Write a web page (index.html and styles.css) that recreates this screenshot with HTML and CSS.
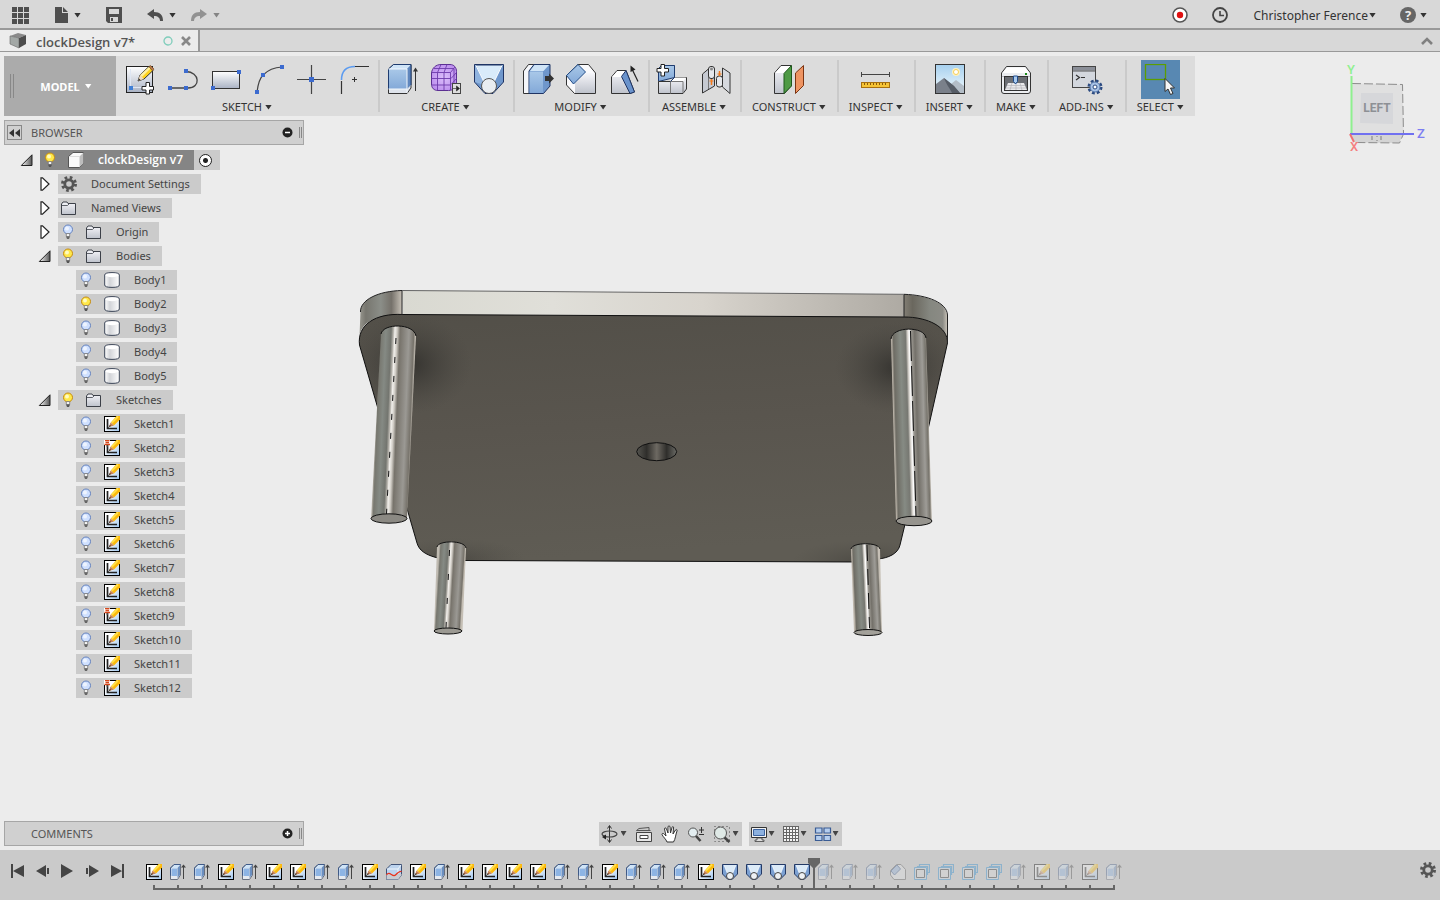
FILE: index.html
```html
<!DOCTYPE html>
<html lang="en">
<head>
  <meta charset="UTF-8" />
  <meta name="viewport" content="width=device-width, initial-scale=1.0"/>
  <title>clockDesign v7*</title>
  <link rel="stylesheet" href="styles.css">
</head>
<body>

<svg class="sprite" aria-hidden="true">
  <defs>
    <linearGradient id="gPaper" x1="0" y1="0" x2="0" y2="1"><stop offset="0" stop-color="#fff"/><stop offset="1" stop-color="#a9b2c4"/></linearGradient>
    <linearGradient id="gBlue" x1="0" y1="0" x2="0" y2="1"><stop offset="0" stop-color="#a9c8e8"/><stop offset="1" stop-color="#83a9d8"/></linearGradient>
    <linearGradient id="gSteel" x1="0" y1="0" x2="0" y2="1"><stop offset="0" stop-color="#f6f6fa"/><stop offset="1" stop-color="#bfc3cc"/></linearGradient>
    <linearGradient id="gSketch" x1="0" y1="0" x2="1" y2="1"><stop offset="0.35" stop-color="#fff"/><stop offset="1" stop-color="#9cc4ee"/></linearGradient>
    <linearGradient id="gCyl" x1="0" y1="0" x2="1" y2="0"><stop offset="0" stop-color="#fff"/><stop offset="0.35" stop-color="#d2d4d8"/><stop offset="1" stop-color="#fff"/></linearGradient>
    <linearGradient id="gSky" x1="0" y1="0" x2="0" y2="1"><stop offset="0" stop-color="#a6d0ee"/><stop offset="1" stop-color="#f3fafd"/></linearGradient>
    <linearGradient id="gTri" x1="0" y1="0" x2="1" y2="0"><stop offset="0" stop-color="#fff"/><stop offset="1" stop-color="#555"/></linearGradient>
    <radialGradient id="gForm" cx="0.5" cy="0.5" r="0.6"><stop offset="0" stop-color="#dcc0fb"/><stop offset="1" stop-color="#b98aec"/></radialGradient>
  </defs>

  <!-- toolbar icons -->
  <symbol id="t-sketch" viewBox="0 0 33 33">
    <rect x="3.5" y="2.5" width="26" height="26" fill="url(#gPaper)" stroke="#222"/>
    <path d="M7.5 5v18.500h18" fill="none" stroke="#dfe6f2"/>
    <rect x="6" y="22" width="4" height="4" fill="#3f7fd6"/>
    <path d="M15 17l2-6L26 2.500l4 4L21 15z" fill="#ffd21e" stroke="#333"/>
    <path d="M17 11l9-8 1.500 1.500-8.500 8.500z" fill="#fff0a0"/>
    <path d="M26 2.500l1.500-1 3.500 3.500-1.500 2z" fill="#b87a4a" stroke="#6e4424" stroke-width=".6"/>
    <path d="M15 17l2-6 4 4z" fill="#f2dcc0"/><path d="M15 17l1-2.500 1.500 1.500z" fill="#222"/>
    <path d="M23 18.500h3.500V22.500H30.500V26H26.500v4H23v-4h-4v-3.500h4z" fill="#fff" stroke="#222"/>
  </symbol>
  <symbol id="t-line" viewBox="0 0 33 33">
    <path d="M4 24h18c13 0 12-16-2-16.500" fill="none" stroke="#444" stroke-width="1.300"/>
    <path d="M2 22h4v4H2zM18 22h4v4h-4zM18 5h4v4h-4z" fill="#3c6bcf"/>
  </symbol>
  <symbol id="t-rect" viewBox="0 0 33 33">
    <rect x="3.500" y="7.500" width="27" height="17" fill="url(#gPaper)" stroke="#333"/>
    <path d="M2 22h4v4H2zM28 6h4v4h-4z" fill="#3c6bcf"/>
  </symbol>
  <symbol id="t-arc" viewBox="0 0 33 33">
    <path d="M5 28C6 20 7 15 11 11S21 3.500 30 3" fill="none" stroke="#444" stroke-width="1.200"/>
    <path d="M3 26h4v4H3zM9 9h4v4H9zM28 1h4v4h-4z" fill="#3c6bcf"/>
  </symbol>
  <symbol id="t-point" viewBox="0 0 33 33">
    <path d="M16.500 1v29M2 15.500h29" stroke="#444" stroke-width="1.200"/>
    <rect x="14" y="13" width="5" height="5" fill="#3c6bcf"/>
  </symbol>
  <symbol id="t-fillet" viewBox="0 0 33 33">
    <path d="M3.500 17v13M17 2.500h14" stroke="#333" stroke-width="1.200"/>
    <path d="M3.500 16C3.500 7 8 2.500 17 2.500" fill="none" stroke="#5b9bf0" stroke-width="1.500"/>
    <path d="M16.500 13v5M14 15.500h5" stroke="#333"/>
  </symbol>
  <symbol id="t-extrude" viewBox="0 0 33 33">
    <path d="M2.500 5l5-4.500h17.500V24l-4 5.500H2.500z" fill="#dfe4ec" stroke="#333"/>
    <path d="M2.500 5H21v20H2.500z" fill="url(#gBlue)"/>
    <path d="M2.500 5l5-4.500h17.500L21 5z" fill="#cfe4f7"/><path d="M21 5l4-4.500V21l-4 4z" fill="#5f86bd"/>
    <path d="M2.500 25V5l5-4.500h17.500V21" fill="none" stroke="#1f3c70"/>
    <path d="M2.500 5H21V29M2.500 25H21" fill="none" stroke="#f2f7fc"/>
    <path d="M29.500 27V5" stroke="#333"/><path d="M27 7.500l2.500-4 2.500 4z" fill="#333"/>
  </symbol>
  <symbol id="t-form" viewBox="0 0 33 33">
    <path d="M2.500 9C3 4 7 .5 12 .5h9c4 0 6.500 3 6.500 7V18c0 5-3 8.500-8 8.500H9C5 26.500 2.500 24 2.500 20z" fill="url(#gForm)" stroke="#5b2f92"/>
    <path d="M3 8.500h18.500M2.500 14.500h19.500M3 21h18.500M8.500 9v17M15 9v17M5 4.500h20M21.500 8.500V26M21.500 8.500L26 3M22 14.500l5.500-6M22 20.500l5.500-6M8.500 8.500L12 .5M15 8.500L18 .5M25 5v17" fill="none" stroke="#6d3bab" stroke-width=".9"/>
    <rect x="23.500" y="19.500" width="8" height="10" fill="#ddd" stroke="#444"/>
    <path d="M24 24.500h3.500v-2.500l3 2.500-3 2.500v-2.500" fill="#222" stroke="#222" stroke-width=".6"/>
  </symbol>
  <symbol id="t-hole" viewBox="0 0 33 33">
    <path d="M2.500.5h29V18L21 29.500h-8L2.500 18z" fill="#6f97cc" stroke="#1f3464"/>
    <path d="M4 1h26l-8 17H12z" fill="#d9ebfa"/><path d="M4 1l-1 1v16l9 3V18z" fill="#8fb3df"/>
    <path d="M4 1h26" stroke="#1f3464"/><path d="M4 1.500L12 18M30 1.500L22 18" stroke="#fff"/>
    <circle cx="17" cy="22" r="7.500" fill="#e9edf1" stroke="#555"/>
  </symbol>
  <symbol id="t-press" viewBox="0 0 33 33">
    <path d="M2.500 7l5-6.500h8L10 7v22.500H2.500z" fill="#f4f6fa" stroke="#333"/>
    <path d="M8 7l5-6.500h16V22l-6.500 7.500H8z" fill="#6f97cc" stroke="#1f3464"/>
    <path d="M8.500 7.500H22V29H8.500z" fill="url(#gBlue)"/><path d="M9 7l4.500-6H28l-5.500 6z" fill="#cfe4f7"/>
    <path d="M24 12h4V9.500l5 5-5 5V17h-4z" fill="#333"/>
  </symbol>
  <symbol id="t-chamfer" viewBox="0 0 33 33">
    <path d="M2.500 11.500L14 .5h10.500L31.500 9v20.500H10.500L2.500 21z" fill="#fafafc" stroke="#333"/>
    <path d="M11 19l11-10h9V29H11z" fill="url(#gSteel)"/>
    <path d="M2.500 11.500L14 .5 21.500 8l-12 12z" fill="url(#gBlue)" stroke="#1f4a86"/>
  </symbol>
  <symbol id="t-draft" viewBox="0 0 33 33">
    <path d="M4.500 13L10 6.500h9L27.500 28 23 29.500H4.500z" fill="url(#gSteel)" stroke="#333"/>
    <path d="M5 13l5.500-6H18l-3.500 6z" fill="#fff"/>
    <path d="M14.500 12.500l4.500-6L27.500 28 23 29.500z" fill="#6a93cc" stroke="#1f3464"/>
    <path d="M31 17.500L25 5" stroke="#222" stroke-width="1.200"/><path d="M23.500 1.500l5 4-5 2.500z" fill="#222"/>
  </symbol>
  <symbol id="t-newcomp" viewBox="0 0 33 33">
    <path d="M2.500 17.500V4.500l3-3h13v12z" fill="url(#gBlue)" stroke="#1f3c70"/>
    <path d="M2.500 17.500h12l4-4h12V25l-3.500 4.500H2.500z" fill="url(#gSteel)" stroke="#333"/>
    <path d="M15 17.500l4-4h11l-3 4z" fill="#fff"/><path d="M14.500 17.500V29.500M14.500 17.500H27V29" fill="none" stroke="#777"/>
    <path d="M14.500 17.500L18.500 13.500V1.500" fill="none" stroke="#1f3c70"/>
    <path d="M5 .5h3.500V4.500h4V8h-4v4H5V8H1V4.500h4z" fill="#fff" stroke="#222"/>
  </symbol>
  <symbol id="t-joint" viewBox="0 0 33 33">
    <path d="M3.500 10L10 4.500H15.500V22L3.500 29z" fill="#c6cad2" stroke="#333"/>
    <path d="M9.500 5.500V25" stroke="#777"/>
    <rect x="9.500" y="2.500" width="6" height="12" rx="2.500" fill="#e6e8ec" stroke="#333"/><circle cx="12.500" cy="5" r="1.500" fill="#888"/>
    <path d="M23.500 4L31 9v20.500L23.500 23z" fill="#d6d9df" stroke="#333"/>
    <rect x="17.500" y="12" width="6" height="11" rx="2.500" fill="#e6e8ec" stroke="#333"/>
    <path d="M12.500 15v6M20.500 7v5" stroke="#f47a1c" stroke-width="1.500"/><path d="M10.500 17h4M18.500 10h4" stroke="#f47a1c"/>
  </symbol>
  <symbol id="t-construct" viewBox="0 0 33 33">
    <path d="M2.500 9L9 1.500h10V22l-6.500 7.500h-10z" fill="url(#gSteel)" stroke="#333"/>
    <path d="M3 9l6.500-7H18l-6 7z" fill="#fff"/>
    <path d="M12 9.500l7.500-8V22L12 29.500z" fill="#4e9a45" stroke="#1f5a1c"/>
    <path d="M23.500 9L31.500 1.500v20L23.500 29.500z" fill="#ee9462" stroke="#7a3413"/>
  </symbol>
  <symbol id="t-inspect" viewBox="0 0 33 33">
    <path d="M2.500 10.500h28M2.500 8v5M30.500 8v5" stroke="#444"/>
    <rect x="2.500" y="18.500" width="28" height="5" fill="#f6c436" stroke="#a8700f"/>
    <path d="M5.500 19v2M8.500 19v2M11.500 19v2M14.500 19v2M17.500 19v2M20.500 19v2M23.500 19v2M26.500 19v2" stroke="#8a5a0a"/>
  </symbol>
  <symbol id="t-insert" viewBox="0 0 33 33">
    <rect x="2.500" y=".5" width="29" height="29" fill="url(#gSky)" stroke="#333"/>
    <circle cx="23" cy="8" r="4" fill="#fdf2c2"/><circle cx="23" cy="8" r="2.500" fill="#fff" stroke="#f4cf5c"/>
    <path d="M18 20l5-4 8 6v7H18z" fill="#b3bdc7"/><path d="M3 20l8-6 10 8 6 7H3z" fill="#7a808a"/><path d="M11 14l10 8 6 7H19c-2-5-5-7-8-15z" fill="#565c66"/>
  </symbol>
  <symbol id="t-make" viewBox="0 0 33 33">
    <path d="M2.500 9L7.500 2.500h19L31.500 9v18q0 2.500-2.500 2.500H5q-2.500 0-2.500-2.500z" fill="#eceef1" stroke="#333"/>
    <path d="M3.500 9L8 3.500h18L30.500 9z" fill="#fff"/><path d="M3 12.500h28" stroke="#b8bcc4"/>
    <rect x="26" y="9" width="2" height="2" fill="#1a8c1a"/>
    <rect x="5.500" y="12.500" width="23" height="14" fill="#6b6e74" stroke="#333"/>
    <path d="M9 19h16l3 7H6z" fill="#e9e9ec"/><path d="M8 21.500h18M7 24h20M13 19l-2 7M17 19v7M21 19l2 7" stroke="#b5b5ba" stroke-width=".7"/>
    <path d="M14.500 12h4v5.500L16.500 20l-2-2.500z" fill="#a9cbf0" stroke="#1f4a8a"/>
  </symbol>
  <symbol id="t-addins" viewBox="0 0 33 33">
    <rect x="2.500" y="2.500" width="23" height="21" fill="#d3d7de" stroke="#444"/>
    <path d="M3 3h22v3.500H3z" fill="#8b8f98"/><path d="M3 7h22" stroke="#555"/>
    <path d="M6 11l3.500 2.500L6 16M11 13.500h4" fill="none" stroke="#333" stroke-width="1.200"/>
    <circle cx="25" cy="23" r="6" fill="none" stroke="#2b4a80" stroke-width="3" stroke-dasharray="2.700 2"/>
    <circle cx="25" cy="23" r="5" fill="#a9c3e6" stroke="#5577ab"/>
    <circle cx="25" cy="23" r="2" fill="#fff" stroke="#2b4a80"/>
  </symbol>
  <symbol id="t-select" viewBox="0 0 33 33">
    <rect x="1.500" y=".5" width="20" height="15" fill="none" stroke="#5c9e00" stroke-width="1.300"/>
    <path d="M21 14.500v13l3-2.500 2.500 5.500 2.500-1-2.500-5.500h4z" fill="#f5f5f5" stroke="#333"/>
  </symbol>

  <!-- 16px icons, shared by the browser tree and the timeline -->
  <symbol id="i-sketch" viewBox="0 0 16 16">
    <rect x=".5" y=".5" width="15" height="15" fill="url(#gSketch)" stroke="#000"/>
    <path d="M3.500 3v9.500H13" fill="none" stroke="#222" stroke-width="1.700"/><path d="M4 12l4-4" stroke="#555"/>
    <path d="M7 6.500L12.500 0H16v3.500L10 9.500z" fill="#fcb80c"/><path d="M8 6.500L14 .5" stroke="#ffe04a" stroke-width="1.800"/>
    <path d="M5 11l1.500-4.500 3.500 3z" fill="#c98252"/><path d="M5 11l.8-2 1.200 1z" fill="#222"/>
  </symbol>
  <symbol id="i-pinned" viewBox="0 0 16 16">
    <use href="#i-sketch"/>
    <path d="M0 0h6v5H0z" fill="#fff"/><path d="M1 .5h4.500M.5 4.500h5.500M1.500 2.500h3.500" stroke="#d5481c" stroke-width="1.400"/><path d="M3.200 5v2" stroke="#555"/>
  </symbol>
  <symbol id="i-extrude" viewBox="0 0 16 16">
    <path d="M.5 4L4 .5h6.500V11L7.500 15.500H.5z" fill="#e6eaf0" stroke="#6a7180"/>
    <path d="M1.500 4.500H7V12H1.500z" fill="#8db4e4"/><path d="M1.500 4L4.500 1H10L7 4z" fill="#cfe4f7"/><path d="M7.500 4l2.500-3v10l-2.500 3z" fill="#6b8fc0"/>
    <path d="M.5 11.500V4L4 .5h6.500" fill="none" stroke="#3f5a88"/>
    <path d="M13.500 15V2" stroke="#444"/><path d="M11 3.500L13.500.5 16 3.500z" fill="#444"/>
  </symbol>
  <symbol id="i-hole" viewBox="0 0 16 16">
    <path d="M.5.5h15V10L10 15.500H6L.5 10z" fill="#7ba0d2" stroke="#243a66"/>
    <path d="M2 1h12l-4 10H6z" fill="#dcebf8"/><path d="M2 1l4 10M14 1l-4 10" stroke="#fff" stroke-width=".7"/>
    <circle cx="8" cy="12" r="3.500" fill="#eef1f4" stroke="#444"/>
  </symbol>
  <symbol id="i-split" viewBox="0 0 16 16">
    <path d="M.5 5L5 .5h10.500V11L12 15.500H.5z" fill="#bcd3ee" stroke="#3f5276"/>
    <path d="M.5 10h15v1L12 15.500H.5z" fill="#c9ccd2"/><path d="M1 5h11v5M12 5l3-4" fill="none" stroke="#eef5fc"/>
    <path d="M.5 11c3-5 6 3 9 0s4-4 6-3.500" fill="none" stroke="#e8301c" stroke-width="1.200"/>
  </symbol>
  <symbol id="i-fillet" viewBox="0 0 16 16">
    <path d="M.5 6.500L6.500.5h4.500l4.500 5v10H4L.5 11z" fill="#e4e7ec" stroke="#555"/><path d="M1 7l6-6 3.500 4-6 6z" fill="#8fb3df" stroke="#2f4f86"/>
  </symbol>
  <symbol id="i-pattern" viewBox="0 0 16 16">
    <path d="M5.500 3.500v-3h10v8h-3M3.500 4v-1.500h10v8h-2" fill="none" stroke="#1f86d0" stroke-width="1.200"/>
    <path d="M.5 3.500h12v12H.5z" fill="#cfdbe6" stroke="#1f86d0"/><path d="M2.500 5.500h8v8h-8z" fill="#e0e0e0" stroke="#222"/>
  </symbol>
  <symbol id="i-bulb" viewBox="0 0 16 16">
    <circle cx="8" cy="5.500" r="4.500" fill="#cfe0ff" stroke="#6482be"/><circle cx="7" cy="4.500" r="2" fill="#eef4ff"/>
    <path d="M6.300 9.500h3.400v3H6.300z" fill="#f2f2f2" stroke="#777" stroke-width=".8"/><path d="M6 12.500h4l-1 2.500H7z" fill="#666"/>
  </symbol>
  <symbol id="i-bulb-on" viewBox="0 0 16 16">
    <circle cx="8" cy="5.500" r="4.500" fill="#ffe84a" stroke="#c58a12"/><circle cx="7" cy="4.500" r="2" fill="#fffbc0"/>
    <path d="M6.300 9.500h3.400v3H6.300z" fill="#f2f2f2" stroke="#777" stroke-width=".8"/><path d="M6 12.500h4l-1 2.500H7z" fill="#555"/>
  </symbol>
  <symbol id="i-folder" viewBox="0 0 16 16">
    <path d="M.5 14.500V4L2 2h4l1 1.500h7.500v11z" fill="url(#gSteel)" stroke="#3c4048"/><path d="M1 5.500h5.500L8 4" fill="none" stroke="#3c4048" stroke-width=".8"/>
  </symbol>
  <symbol id="i-body" viewBox="0 0 16 16">
    <path d="M.7 3Q.7.6 8 .6T15.300 3v10q0 2.400-7.300 2.400T.7 13z" fill="url(#gCyl)" stroke="#3c4658"/><ellipse cx="8" cy="3.200" rx="6.500" ry="2" fill="#fff"/>
  </symbol>
  <symbol id="i-comp" viewBox="0 0 16 16">
    <path d="M.5 4.500L5 .5h10.500V11L11.500 15.500H.5z" fill="#fafafa" stroke="#555"/><path d="M11.500 4.500l4-4V11l-4 4z" fill="#bdbdbd"/><path d="M1 4.500h10.500V15" fill="none" stroke="#ddd"/>
  </symbol>
  <symbol id="i-gear" viewBox="0 0 16 16">
    <circle cx="8" cy="8" r="6.500" fill="none" stroke="#555" stroke-width="3" stroke-dasharray="2.600 2.500"/><circle cx="8" cy="8" r="4.200" fill="none" stroke="#555" stroke-width="2.800"/>
  </symbol>
  <symbol id="i-open" viewBox="0 0 12 12"><path d="M.8 11.500L11.500.8v10.700z" fill="url(#gTri)" stroke="#222"/></symbol>
  <symbol id="i-closed" viewBox="0 0 12 14"><path d="M2.500.8h1.500L10.500 7 4 13.200H2.500z" fill="#fff" stroke="#222" stroke-width="1.200"/></symbol>
</svg>

<header class="appbar">
  <button aria-label="Data panel"><svg width="17" height="17"><path d="M0 0h5v5H0zM6 0h5v5H6zM12 0h5v5h-5zM0 6h5v5H0zM6 6h5v5H6zM12 6h5v5h-5zM0 12h5v5H0zM6 12h5v5H6zM12 12h5v5h-5z" fill="#4f4f4f"/></svg></button>
  <button aria-label="File"><svg width="14" height="16"><path d="M1 0h7v6h6v10H1zM9 0l5 5H9z" fill="#4f4f4f"/></svg><i class="caret"></i></button>
  <button aria-label="Save"><svg width="16" height="16"><path d="M0 0h16v16H2l-2-2z" fill="#4f4f4f"/><path d="M3 2h10v5H3zM4 10h8v5H4z" fill="#d8d8d8"/><path d="M5 11h2v3H5z" fill="#4f4f4f"/></svg></button>
  <div class="history">
    <button aria-label="Undo"><svg width="16" height="13"><path d="M0 5l7-5v3c6 0 9 3 9 9h-3c0-3-2-5-6-5v3z" fill="#4f4f4f"/></svg><i class="caret"></i></button>
    <button class="disabled" aria-label="Redo"><svg width="16" height="13"><path d="M16 5L9 0v3C3 3 0 6 0 12h3c0-3 2-5 6-5v3z" fill="#4f4f4f"/></svg><i class="caret"></i></button>
  </div>
  <div class="account">
    <button aria-label="Record"><svg width="16" height="16"><circle cx="8" cy="8" r="7" fill="#fff" stroke="#555" stroke-width="1.600"/><circle cx="8" cy="8" r="3.200" fill="#e01010"/></svg></button>
    <button aria-label="Job status"><svg width="16" height="16"><circle cx="8" cy="8" r="7" fill="none" stroke="#444" stroke-width="1.800"/><path d="M8 4v4.500h4" fill="none" stroke="#444" stroke-width="1.600"/></svg></button>
    <button class="user">Christopher Ference<i class="caret"></i></button>
    <button class="help" aria-label="Help"><span class="help-mark">?</span><i class="caret"></i></button>
  </div>
</header>

<div class="tabs">
  <div class="tab">
    <svg width="16" height="16"><path d="M0 3l8-3 8 2-7 3z" fill="#8a8a8a"/><path d="M0 3l9 2v10L0 11z" fill="#a3a8a6" stroke="#666" stroke-width=".6"/><path d="M9 5l7-3v9l-7 4z" fill="#4d4d4d"/></svg>
    <span class="tab-name">clockDesign v7*</span>
    <svg width="10" height="10"><circle cx="5" cy="5" r="4" fill="none" stroke="#7fcdbb" stroke-width="1.300"/></svg>
    <button aria-label="Close tab"><svg width="10" height="10"><path d="M1 1l8 8M9 1L1 9" stroke="#888" stroke-width="2.600"/></svg></button>
  </div>
  <button class="collapse" aria-label="Collapse toolbar"><svg width="12" height="8"><path d="M1 7l5-5 5 5" fill="none" stroke="#808080" stroke-width="2.600"/></svg></button>
</div>

<main class="workspace">
  <nav class="toolbar">
    <button class="mode"><span class="grip"></span><span>MODEL</span><i class="caret"></i></button>
    <div class="group">
      <div class="tools">
        <button aria-label="Create Sketch"><svg><use href="#t-sketch"/></svg></button>
        <button aria-label="Line"><svg><use href="#t-line"/></svg></button>
        <button aria-label="Rectangle"><svg><use href="#t-rect"/></svg></button>
        <button aria-label="Arc"><svg><use href="#t-arc"/></svg></button>
        <button aria-label="Point"><svg><use href="#t-point"/></svg></button>
        <button aria-label="Sketch Fillet"><svg><use href="#t-fillet"/></svg></button>
      </div>
      <button class="menu">SKETCH<i class="caret"></i></button>
    </div>
    <div class="group">
      <div class="tools">
        <button aria-label="Extrude"><svg><use href="#t-extrude"/></svg></button>
        <button aria-label="Create Form"><svg><use href="#t-form"/></svg></button>
        <button aria-label="Hole"><svg><use href="#t-hole"/></svg></button>
      </div>
      <button class="menu">CREATE<i class="caret"></i></button>
    </div>
    <div class="group">
      <div class="tools">
        <button aria-label="Press Pull"><svg><use href="#t-press"/></svg></button>
        <button aria-label="Chamfer"><svg><use href="#t-chamfer"/></svg></button>
        <button aria-label="Draft"><svg><use href="#t-draft"/></svg></button>
      </div>
      <button class="menu">MODIFY<i class="caret"></i></button>
    </div>
    <div class="group">
      <div class="tools">
        <button aria-label="New Component"><svg><use href="#t-newcomp"/></svg></button>
        <button aria-label="Joint"><svg><use href="#t-joint"/></svg></button>
      </div>
      <button class="menu">ASSEMBLE<i class="caret"></i></button>
    </div>
    <div class="group single">
      <div class="tools"><button aria-label="Offset Plane"><svg><use href="#t-construct"/></svg></button></div>
      <button class="menu">CONSTRUCT<i class="caret"></i></button>
    </div>
    <div class="group single">
      <div class="tools"><button aria-label="Measure"><svg><use href="#t-inspect"/></svg></button></div>
      <button class="menu">INSPECT<i class="caret"></i></button>
    </div>
    <div class="group single">
      <div class="tools"><button aria-label="Insert Image"><svg><use href="#t-insert"/></svg></button></div>
      <button class="menu">INSERT<i class="caret"></i></button>
    </div>
    <div class="group single">
      <div class="tools"><button aria-label="3D Print"><svg><use href="#t-make"/></svg></button></div>
      <button class="menu">MAKE<i class="caret"></i></button>
    </div>
    <div class="group single">
      <div class="tools"><button aria-label="Scripts and Add-Ins"><svg><use href="#t-addins"/></svg></button></div>
      <button class="menu">ADD-INS<i class="caret"></i></button>
    </div>
    <div class="group single">
      <div class="tools"><button class="active" aria-label="Select"><svg><use href="#t-select"/></svg></button></div>
      <button class="menu">SELECT<i class="caret"></i></button>
    </div>
  </nav>

  <svg class="viewcube" width="90" height="96" viewBox="1340 60 90 96">
    <path d="M1352 83.500l50.500 1 1 49.500-52.500-.5z" fill="#e0e0e0"/>
    <path d="M1361 93h32v31l-33-1z" fill="#d6d7da"/>
    <path d="M1351 134l52 .5-4 8.500-44-.5z" fill="#d4d4d4"/>
    <path d="M1352 83.500l50.500 1 1 49.500-4 9-44-.5" fill="none" stroke="#8c8c8c" stroke-dasharray="9 3"/>
    <path d="M1372 136v4M1377 136v1M1381 136v4M1377 140v1" stroke="#999" stroke-width="1.500"/>
    <text class="face" x="1377" y="112">LEFT</text>
    <path d="M1351.500 133V76" stroke="#8ff08f" stroke-width="2"/>
    <path d="M1350 134h64" stroke="#7070f0" stroke-width="2"/>
    <path d="M1350 134l4 8" stroke="#f07070" stroke-width="2"/>
    <text class="axis axis-y" x="1351" y="74">Y</text>
    <text class="axis axis-z" x="1421" y="138">Z</text>
    <text class="axis axis-x" x="1354" y="151">X</text>
  </svg>

  <div class="stage">
    <aside class="browser">
      <div class="panel">
        <button class="panel-fold" aria-label="Fold browser"><svg width="11" height="8"><path d="M5 0v8L0 4zM11 0v8L6 4z" fill="#333"/></svg></button>
        <h2>BROWSER</h2>
        <button aria-label="Minimize"><svg width="11" height="11"><circle cx="5.500" cy="5.500" r="5" fill="#222"/><path d="M3 5.500h5" stroke="#fff" stroke-width="1.500"/></svg></button>
        <span class="grip"></span>
      </div>
      <ul class="tree" id="tree"></ul>
    </aside>

    <svg class="model" width="610" height="370" viewBox="350 280 610 370">
      <defs>
        <linearGradient id="mSide" x1="0" x2="1"><stop offset="0" stop-color="#d9d9d1"/><stop offset=".3" stop-color="#e0dfd9"/><stop offset=".6" stop-color="#d8d4cd"/><stop offset="1" stop-color="#aeaaa3"/></linearGradient>
        <linearGradient id="mCornerL" x1="0" x2="1"><stop offset="0" stop-color="#98978f"/><stop offset=".15" stop-color="#77766f"/><stop offset=".5" stop-color="#8b8e88"/><stop offset=".75" stop-color="#75716a"/><stop offset="1" stop-color="#c6c0b6"/></linearGradient>
        <linearGradient id="mCornerR" x1="0" x2="1"><stop offset="0" stop-color="#827e74"/><stop offset=".2" stop-color="#6a675e"/><stop offset=".6" stop-color="#858780"/><stop offset=".9" stop-color="#8b8b85"/><stop offset="1" stop-color="#c4beb4"/></linearGradient>
        <linearGradient id="mFace" x1="0" y1="0" x2=".15" y2="1"><stop offset="0" stop-color="#524f48"/><stop offset=".5" stop-color="#59554e"/><stop offset="1" stop-color="#5f5c54"/></linearGradient>
        <radialGradient id="mShade"><stop offset="0" stop-color="#2c2b28" stop-opacity=".8"/><stop offset="1" stop-color="#45433e" stop-opacity="0"/></radialGradient>
        <linearGradient id="mLegL" x1="0" x2="1" gradientTransform="matrix(.83 0 -.17 1 .17 0)"><stop offset="0" stop-color="#c0bbb2"/><stop offset=".06" stop-color="#77776f"/><stop offset=".2" stop-color="#858a84"/><stop offset=".34" stop-color="#73756f"/><stop offset=".4" stop-color="#b5b2ab"/><stop offset=".44" stop-color="#f2f0ec"/><stop offset=".5" stop-color="#d0ccc5"/><stop offset=".58" stop-color="#77736b"/><stop offset=".82" stop-color="#9b9994"/><stop offset=".95" stop-color="#77736b"/><stop offset="1" stop-color="#c4beb4"/></linearGradient>
        <linearGradient id="mLegR" x1="0" x2="1" gradientTransform="matrix(.87 0 .13 1 0 0)"><stop offset="0" stop-color="#bdb6ab"/><stop offset=".06" stop-color="#6e6c64"/><stop offset=".25" stop-color="#868b84"/><stop offset=".4" stop-color="#777872"/><stop offset=".46" stop-color="#d6d2cc"/><stop offset=".51" stop-color="#fff"/><stop offset=".56" stop-color="#9c9992"/><stop offset=".66" stop-color="#74716a"/><stop offset=".85" stop-color="#9e9c97"/><stop offset=".95" stop-color="#77746c"/><stop offset="1" stop-color="#c6c0b6"/></linearGradient>
        <linearGradient id="mHole" x1="0" x2="1"><stop offset="0" stop-color="#55544f"/><stop offset=".25" stop-color="#2f2e2b"/><stop offset=".5" stop-color="#6d6962"/><stop offset=".75" stop-color="#2f2e2b"/><stop offset="1" stop-color="#6b6b66"/></linearGradient>
        <clipPath id="mClip"><path d="M403 314.500L904 317C928 317 948 327 947.500 343L929 425 900 545C898 554 888 558 878 559L860 562 465 560.500C445 560 421 558 417 543L359.500 345C357 325 375 313 403 314.500z"/></clipPath>
      </defs>
      <path d="M402 290.500L904 294.300V317.500L403 315z" fill="url(#mSide)"/>
      <path d="M402 290.500C378 291 361 300 360.500 311L359.500 336C361 322 378 314 402 315z" fill="url(#mCornerL)"/>
      <path d="M904 294.300C928 296 946 303 947 314V340C944 326 925 317 904 317z" fill="url(#mCornerR)"/>
      <g clip-path="url(#mClip)">
        <path d="M350 310h600v255H350z" fill="url(#mFace)"/>
        <ellipse cx="410" cy="364" rx="62" ry="50" fill="url(#mShade)"/>
        <ellipse cx="897" cy="368" rx="62" ry="46" fill="url(#mShade)"/>
        <ellipse cx="456" cy="560" rx="70" ry="22" fill="url(#mShade)" opacity=".45"/>
        <ellipse cx="862" cy="562" rx="70" ry="22" fill="url(#mShade)" opacity=".45"/>
      </g>
      <path d="M403 314.500L904 317C928 317 948 327 947.500 343L929 425 900 545C898 554 888 558 878 559L860 562 465 560.500C445 560 421 558 417 543L359.500 345C357 325 375 313 403 314.500z" fill="none" stroke="#111"/>
      <path d="M360.500 312C360 300 378 291 402 290.500V315M904 317V294.300C928 295 947 303 947.500 315V343" fill="none" stroke="#222"/>
      <path d="M402 290.500L904 294.300" stroke="#666"/>
      <ellipse cx="656.700" cy="451.700" rx="20" ry="9" fill="url(#mHole)" stroke="#111"/>

      <path d="M381 334C383 323 414 323 416 336L407 518.500H371z" fill="url(#mLegL)"/>
      <path d="M381 334C383 323 414 323 416 336" fill="none" stroke="#111"/><path d="M396 338L386.500 514" stroke="#111" stroke-dasharray="6 13"/>
      <ellipse cx="389" cy="518.500" rx="18" ry="4.700" fill="#8b8983" stroke="#111"/>

      <path d="M891 339C892 326 925 326 926 338L932 521H896z" fill="url(#mLegR)"/>
      <path d="M891 339C892 326 925 326 926 338" fill="none" stroke="#111"/><path d="M910.500 331L916 516" stroke="#111" stroke-dasharray="30 5"/>
      <ellipse cx="914" cy="521" rx="18" ry="4.700" fill="#96948e" stroke="#111"/>

      <path d="M437 547C438 540 465 540 466 548L462.500 631H434z" fill="url(#mLegL)"/>
      <path d="M437 547C438 540 465 540 466 548" fill="none" stroke="#111"/><path d="M449.500 550L446 628" stroke="#111" stroke-dasharray="6 18"/>
      <ellipse cx="448" cy="631" rx="14" ry="3" fill="#9b9992" stroke="#111"/>

      <path d="M851 549C852 542 879 542 880 549L882 632H854z" fill="url(#mLegR)"/>
      <path d="M851 549C852 542 879 542 880 549" fill="none" stroke="#111"/><path d="M867 545L869.500 628" stroke="#111" stroke-dasharray="16 8"/>
      <ellipse cx="868" cy="632.500" rx="14" ry="3" fill="#a3a19a" stroke="#111"/>
    </svg>
  </div>

  <div class="dock">
    <div class="panel">
      <h2 class="indent">COMMENTS</h2>
      <button aria-label="Expand comments"><svg width="11" height="11"><circle cx="5.500" cy="5.500" r="5" fill="#222"/><path d="M3 5.500h5M5.500 3v5" stroke="#fff" stroke-width="1.500"/></svg></button>
      <span class="grip"></span>
    </div>
    <div class="navbar">
      <div class="navgroup">
        <button aria-label="Orbit"><svg width="18" height="18"><path d="M8.500 1v16M6.500 3.500l2-3 2 3M6.500 14.500l2 3 2-3" fill="none" stroke="#333"/><ellipse cx="8.500" cy="9" rx="7.500" ry="3" fill="none" stroke="#444" stroke-width="1.200"/><path d="M5 9.500v5L1 12z" fill="#222"/></svg><i class="caret"></i></button>
        <button aria-label="Look At"><svg width="18" height="18"><path d="M1.500 7.500h15v9h-15z" fill="#e6e6e6" stroke="#444"/><path d="M5 10.500h8v3H5z" fill="#fff" stroke="#444"/><path d="M1.500 5.500L4 3.500l10-1v3M1.500 5.500h14" fill="none" stroke="#555"/></svg></button>
        <button aria-label="Pan"><svg width="18" height="18"><path d="M6 17C5 14 2 12 1 9.500c0-1.500 1.500-1.500 2.500 0L5 11 3.500 4c0-1.500 1.500-1.500 2 0L7 8 7 2c0-1.500 2-1.500 2 0l.5 6L11 2.500c.5-1.500 2-1 1.500.5L12 9l2.500-4c.8-1 2-.5 1.500 1-1.500 4-1.500 8-3.500 11z" fill="#fff" stroke="#333"/></svg></button>
        <button aria-label="Zoom"><svg width="18" height="18"><circle cx="6" cy="7.500" r="4.500" fill="#e3edf0" stroke="#555"/><path d="M9 11l4.500 5" stroke="#444" stroke-width="2.600"/><path d="M14.500 2v6M12 5h5M12 9.500h5" stroke="#333"/></svg></button>
        <button aria-label="Fit"><svg width="18" height="18"><path d="M1 1.500h15.500v15H1.500V1" fill="none" stroke="#888" stroke-dasharray="2 2"/><circle cx="7.500" cy="8" r="6" fill="#dfe9e6" stroke="#555"/><path d="M11.500 12.500l5 4.500" stroke="#444" stroke-width="2.600"/></svg><i class="caret"></i></button>
      </div>
      <div class="navgroup">
        <button aria-label="Display Settings"><svg width="16" height="18"><path d="M.5 2.500h15v10H.5z" fill="#f2f2f2" stroke="#333"/><path d="M2.500 4.500h11v6h-11z" fill="#8cb0de" stroke="#3d64a0"/><path d="M6 13h5v2h2v1.500H4V15h2z" fill="#ddd" stroke="#444" stroke-width=".8"/></svg><i class="caret"></i></button>
        <button aria-label="Grid and Snaps"><svg width="16" height="18"><path d="M0 1.500h15v15H0z" fill="#f4f4f4"/><path d="M0 1.500h16M0 4.500h16M0 7.500h16M0 10.500h16M0 13.500h16M0 16.500h16M.5 1v16M3.500 1v16M6.500 1v16M9.500 1v16M12.500 1v16M15.500 1v16" stroke="#666"/></svg><i class="caret"></i></button>
        <button aria-label="Viewports"><svg width="16" height="18"><path d="M.5 3h6.500v5H.5zM9 3h6.500v5H9zM.5 10.500h6.500v5H.5zM9 10.500h6.500v5H9z" fill="#b4cdee" stroke="#3a5c94" stroke-width="1.200"/></svg><i class="caret"></i></button>
      </div>
    </div>
  </div>
</main>

<footer class="timeline">
  <div class="playback">
    <button aria-label="Go to start"><svg width="13" height="14"><path d="M0 0h2v14H0zM13 1v12L2 7z" fill="#444"/></svg></button>
    <button aria-label="Step back"><svg width="13" height="14"><path d="M10 1v12L0 7zM11 4h2v6h-2z" fill="#444"/></svg></button>
    <button aria-label="Play"><svg width="13" height="14"><path d="M0 0l12 7L0 14z" fill="#444"/></svg></button>
    <button aria-label="Step forward"><svg width="13" height="14"><path d="M3 1v12l10-6zM0 4h2v6H0z" fill="#444"/></svg></button>
    <button aria-label="Go to end"><svg width="13" height="14"><path d="M11 0h2v14h-2zM0 1v12l11-6z" fill="#444"/></svg></button>
  </div>
  <ol class="features" id="features"></ol>
  <button class="settings" aria-label="Timeline settings"><svg width="16" height="16"><use href="#i-gear"/></svg></button>
</footer>

<script>
  const tree = document.getElementById('tree');
  const features = document.getElementById('features');

  const bodies = [1, 2, 3, 4, 5].map(n => ({ name: 'Body' + n, icon: 'body', bulb: n === 2 ? 'on' : 'off' }));
  const pinned = [2, 9, 12];
  const sketches = [];
  for (let n = 1; n <= 12; n++) {
    sketches.push({ name: 'Sketch' + n, icon: pinned.includes(n) ? 'pinned' : 'sketch', bulb: 'off' });
  }

  const root = {
    name: 'clockDesign v7', icon: 'comp', bulb: 'on', root: true, children: [
      { name: 'Document Settings', icon: 'gear', folder: true },
      { name: 'Named Views', icon: 'folder', folder: true },
      { name: 'Origin', icon: 'folder', bulb: 'off', folder: true },
      { name: 'Bodies', icon: 'folder', bulb: 'on', children: bodies },
      { name: 'Sketches', icon: 'folder', bulb: 'on', children: sketches }
    ]
  };

  function icon(id) {
    return `<svg class="icon"><use href="#i-${id}"/></svg>`;
  }

  function renderNode(node) {
    let toggle = '<span class="toggle"></span>';
    if (node.children) toggle = `<button class="toggle" aria-label="Collapse ${node.name}"><svg width="13" height="12"><use href="#i-open"/></svg></button>`;
    if (node.folder) toggle = `<button class="toggle" aria-label="Expand ${node.name}"><svg width="13" height="14"><use href="#i-closed"/></svg></button>`;

    const bulb = node.bulb ? `<button class="bulb" aria-label="Toggle ${node.name}">${icon(node.bulb === 'on' ? 'bulb-on' : 'bulb')}</button>` : '';
    const label = `<span class="label">${bulb}${icon(node.icon)}<span class="name">${node.name}</span></span>`;
    const radio = node.root ? '<input type="radio" name="active" aria-label="Activate component" checked>' : '';
    const kids = node.children ? `<ul>${node.children.map(renderNode).join('')}</ul>` : '';

    return `<li><div class="node${node.root ? ' root' : ''}">${toggle}<div class="row">${label}${radio}</div></div>${kids}</li>`;
  }

  tree.innerHTML = renderNode(root);

  // S sketch, E extrude, X split, H hole, F fillet, P pattern, | playhead
  const kinds = { S: 'sketch', E: 'extrude', X: 'split', H: 'hole', F: 'fillet', P: 'pattern' };
  const steps = 'SEESESSEESXSESSSSEESEEESHHHH|EEEFPPPPESESE';
  let rolledBack = false;
  let html = '';

  for (const s of steps) {
    if (s === '|') {
      rolledBack = true;
      html += '<li class="playhead"><svg width="12" height="32"><path d="M0 0h12v5L7 10v22H5V10L0 5z" fill="#666"/></svg></li>';
    } else {
      html += `<li class="${rolledBack ? 'rolled' : ''}"><button aria-label="${kinds[s]}">${icon(kinds[s])}</button></li>`;
    }
  }
  features.innerHTML = html;
</script>

</body>
</html>
```

FILE: styles.css
```css
* {
  box-sizing: border-box;
}

body {
  margin: 0;
  min-height: 100vh;
  display: flex;
  flex-direction: column;
  font-family: 'Lucida Grande', 'Noto Sans', 'Open Sans', sans-serif;
  font-size: 11px;
  color: #444;
  background: #ececec;
}

button {
  display: inline-flex;
  align-items: center;
  justify-content: center;
  padding: 0;
  border: none;
  background: none;
  font: inherit;
  color: inherit;
  cursor: pointer;
}

svg {
  display: block;
  flex: none;
  overflow: visible;
}

ul,
ol {
  list-style: none;
  margin: 0;
  padding: 0;
}

.sprite {
  position: absolute;
  width: 0;
  height: 0;
}

.caret {
  width: 7px;
  height: 5px;
  background: currentColor;
  clip-path: polygon(0 0, 100% 0, 50% 100%);
}

.grip {
  width: 4px;
  height: 11px;
  border: solid #888;
  border-width: 0 1px;
}

/* top bar */
.appbar {
  display: flex;
  align-items: center;
  gap: 25px;
  height: 30px;
  padding: 2px 13px 0 12px;
  background: #d8d8d8;
  border-bottom: 2px solid #999;
  color: #333;
}

.appbar button {
  gap: 6px;
}

.history {
  display: flex;
  gap: 15px;
}

.disabled {
  opacity: 0.5;
}

.account {
  display: flex;
  align-items: center;
  gap: 24px;
  margin-left: auto;
}

.appbar .user {
  margin-left: 2px;
  gap: 1px;
  font-size: 12px;
}

.appbar .help {
  gap: 4px;
}

.help-mark {
  width: 16px;
  height: 16px;
  border-radius: 50%;
  background: #666;
  color: #eee;
  font-size: 13px;
  font-weight: 700;
  line-height: 16px;
  text-align: center;
}

/* document tabs */
.tabs {
  display: flex;
  justify-content: space-between;
  height: 22px;
  background: #d8d8d8;
  border-bottom: 1px solid #999;
}

.tab {
  display: flex;
  align-items: center;
  width: 200px;
  padding: 0 7px 0 10px;
  background: #ececec;
  border-right: 2px solid #999;
}

.tab-name {
  flex: 1;
  padding: 2px 0 0 10px;
  font-family: 'Lucida Grande', 'Open Sans', sans-serif;
  font-size: 13px;
  font-weight: 600;
  line-height: 20px;
  color: #555;
}

.tab button {
  margin-left: 8px;
}

.collapse {
  padding: 0 7px;
}

/* workspace */
.workspace {
  position: relative;
  flex: 1;
  display: flex;
  flex-direction: column;
  gap: 4px;
  padding: 4px;
}

.toolbar {
  display: flex;
  align-self: flex-start;
  height: 60px;
  background: #dcdcdc;
}

.mode {
  position: relative;
  gap: 5px;
  width: 112px;
  padding-left: 12px;
  background: #ababab;
  color: #fff;
  font-size: 11px;
  font-weight: 700;
}

.mode .grip {
  position: absolute;
  left: 6px;
  height: 24px;
}

.group {
  position: relative;
  display: flex;
  flex-direction: column;
  align-items: center;
  padding: 4px 3px 0 3px;
}

.mode + .group {
  padding: 4px 2px 0 2px;
}

.group + .group::before {
  content: '';
  position: absolute;
  left: 0;
  top: 4px;
  width: 2px;
  height: 52px;
  background: #cacaca;
}

.group.single {
  padding: 4px 11px 0 12px;
}

.tools {
  display: flex;
  height: 39px;
}

.tools button {
  width: 43px;
  padding-top: 2px;
}

.single .tools button {
  width: 33px;
}

.tools svg {
  width: 33px;
  height: 33px;
}

.single .tools .active {
  width: 39px;
  background: #5888b2;
}

.menu {
  gap: 3px;
  height: 16px;
  font-size: 11px;
  line-height: 16px;
  color: #333;
}

.viewcube {
  position: absolute;
  top: 8px;
  right: 10px;
}

.viewcube text {
  font-family: Roboto, sans-serif;
  text-anchor: middle;
}

.face {
  font-size: 12px;
  font-weight: 700;
  fill: #8d9095;
}

.axis {
  font-size: 13px;
  font-weight: 500;
}

.axis-x {
  fill: #f58080;
}

.axis-y {
  fill: #90f090;
}

.axis-z {
  fill: #7d7df2;
}

/* browser panel and canvas */
.stage {
  flex: 1;
  display: flex;
  gap: 46px;
}

.browser {
  width: 300px;
}

.model {
  margin-top: 160px;
}

.panel {
  display: flex;
  align-items: center;
  width: 300px;
  height: 25px;
  padding: 0 1px 0 2px;
  background: #d0d0d0;
  border: 1px solid #a6a6a6;
}

.panel h2 {
  flex: 1;
  margin: 0;
  padding-left: 9px;
  font-size: 11px;
  font-weight: 400;
  line-height: 16px;
  color: #555;
}

.panel h2.indent {
  padding-left: 24px;
}

.panel .grip {
  width: 3px;
  margin-left: 6px;
}

.panel-fold {
  width: 15px;
  height: 15px;
  border: 1px solid #888;
}

.tree {
  padding: 5px 0 0 16px;
}

.tree ul {
  padding-left: 18px;
}

.node {
  display: flex;
  align-items: center;
  margin-bottom: 4px;
}

.toggle {
  justify-content: flex-start;
  width: 20px;
}

.row {
  display: flex;
  align-items: center;
  height: 20px;
  background: #cbcbcb;
}

.label {
  display: flex;
  align-items: center;
  height: 20px;
  padding: 0 11px 0 3px;
}

.name {
  align-self: flex-start;
  line-height: 19px;
}

.bulb {
  width: 20px;
  margin: 0 8px 0 -3px;
}

.icon {
  width: 16px;
  height: 16px;
}

.label > .icon {
  margin-right: 14px;
}

.root .label {
  background: #858585;
  color: #fff;
  font-family: 'Lucida Grande', 'Open Sans', sans-serif;
  font-size: 12px;
  font-weight: 600;
}

.row input {
  appearance: none;
  width: 13px;
  height: 13px;
  margin: 0 8px 0 5px;
  border: 1px solid #222;
  border-radius: 50%;
  background: radial-gradient(circle, #222 0 2px, #fff 3px);
}

/* bottom dock */
.dock {
  display: grid;
  grid-template-columns: 300px 1fr 300px;
  align-items: center;
}

.navbar {
  display: flex;
  justify-content: center;
  gap: 7px;
}

.navgroup {
  display: flex;
  gap: 8px;
  height: 24px;
  padding: 0 3px 0 2px;
  background: #cacaca;
}

.navgroup button {
  gap: 2px;
}

.navgroup .caret {
  width: 6px;
}

/* timeline */
.timeline {
  display: flex;
  align-items: flex-start;
  height: 50px;
  padding: 0 4px 0 11px;
  background: #cacaca;
}

.playback {
  display: flex;
  gap: 12px;
  width: 131px;
  padding-top: 14px;
}

.features {
  position: relative;
  display: flex;
  height: 40px;
  padding-top: 14px;
}

.features::after {
  content: '';
  position: absolute;
  left: 11px;
  right: 11px;
  bottom: 0;
  height: 2px;
  background: #666;
}

.features li {
  position: relative;
  width: 24px;
}

.features li::after {
  content: '';
  position: absolute;
  left: 11px;
  bottom: 0;
  width: 2px;
  height: 5px;
  background: #666;
}

.features button {
  width: 24px;
}

.features .rolled button {
  opacity: 0.35;
}

.features .playhead {
  width: 0;
}

.features .playhead::after {
  display: none;
}

.playhead svg {
  position: absolute;
  left: -6px;
  bottom: 0;
}

.settings {
  margin: 12px 0 0 auto;
}
```
